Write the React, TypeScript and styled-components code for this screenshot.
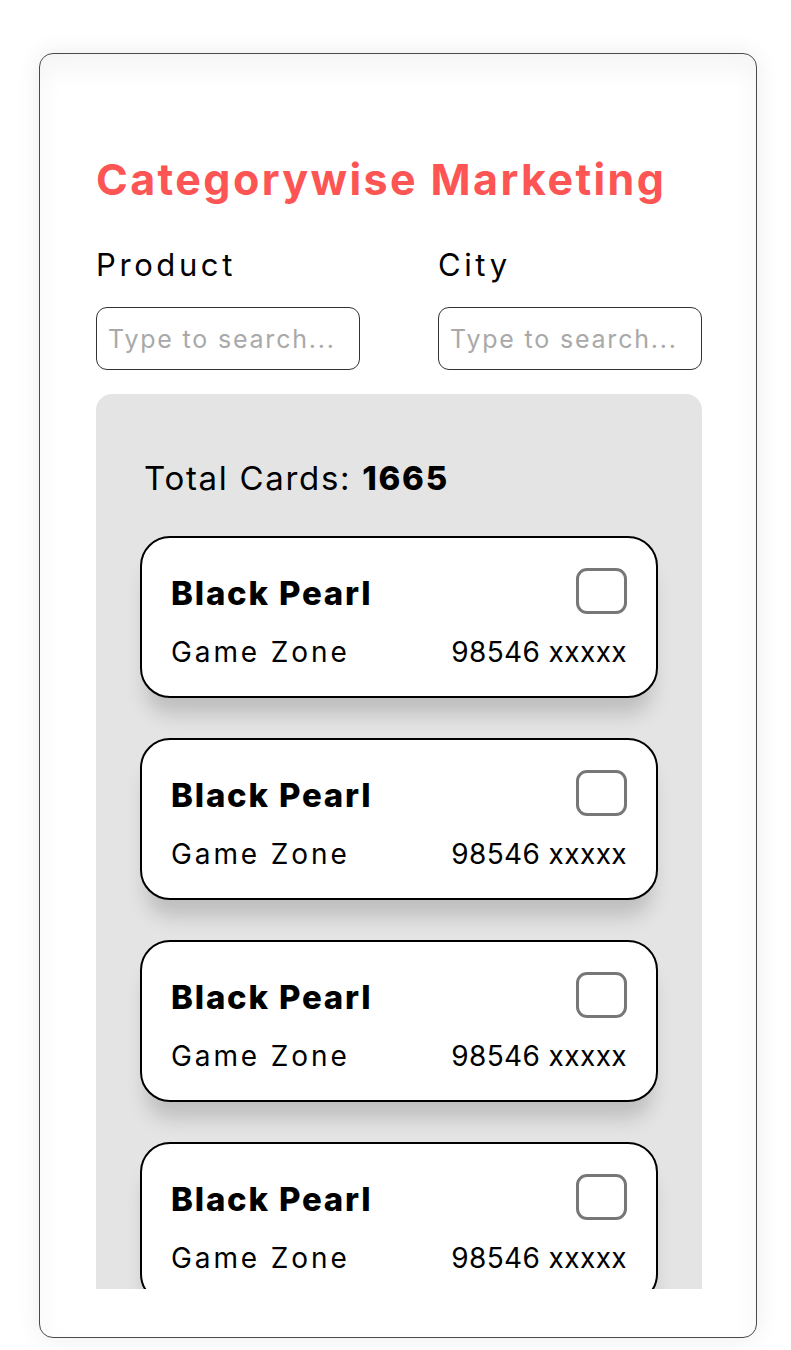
import React from "react";
import styled, { createGlobalStyle } from "styled-components";

const Global = createGlobalStyle`
  html, body { margin: 0; padding: 0; background: #ffffff; }
  body { font-family: Inter, "Open Sans", sans-serif; color: #000; }
  * { box-sizing: border-box; }
`;

const Page = styled.div`
  padding: 53px 34px 12px 39px;
`;

const Frame = styled.div`
  width: 718px;
  height: 1285px;
  border: 1px solid #4a4a4a;
  border-radius: 14px;
  background: #fff;
  box-shadow: 0 0 24px rgba(0, 0, 0, 0.08), inset 0 14px 26px rgba(0, 0, 0, 0.045);
  padding: 99px 54px 0 56px;
  display: flex;
  flex-direction: column;
`;

const Title = styled.h1`
  margin: 0;
  font-size: 43px;
  line-height: 52px;
  font-weight: 700;
  color: #fd5454;
  letter-spacing: 2.4px;
  white-space: nowrap;
`;

const Filters = styled.div`
  display: grid;
  grid-template-columns: 264px 264px;
  justify-content: space-between;
  margin-top: 40px;
`;

const Field = styled.div`
  display: flex;
  flex-direction: column;
`;

const Label = styled.label`
  font-size: 31px;
  line-height: 40px;
  font-weight: 400;
  letter-spacing: 3.6px;
`;

const Input = styled.input`
  margin-top: 22px;
  height: 63px;
  border: 1.5px solid #333;
  border-radius: 11px;
  padding: 0 11px;
  font-family: inherit;
  font-size: 25px;
  letter-spacing: 1.8px;
  outline: none;
  background: #fff;
  &::placeholder { color: #a9a9a9; }
`;

const Panel = styled.div`
  margin-top: 24px;
  height: 895px;
  background: #e4e4e4;
  border-radius: 16px 16px 0 0;
  overflow: hidden;
  padding: 62px 44px 0 44px;
`;

const Total = styled.div`
  font-size: 33px;
  line-height: 44px;
  padding-left: 4px;
  letter-spacing: 1.7px;
  b { font-weight: 800; }
`;

const List = styled.div`
  margin-top: 36px;
  display: flex;
  flex-direction: column;
  gap: 40px;
`;

const Card = styled.div`
  height: 162px;
  flex-shrink: 0;
  background: #fff;
  border: 2px solid #000;
  border-radius: 30px;
  box-shadow: 0 22px 20px -6px rgba(0, 0, 0, 0.17);
  padding: 30px 29px 0 29px;
  display: flex;
  flex-direction: column;
`;

const Row = styled.div`
  display: flex;
  justify-content: space-between;
  align-items: center;
`;

const Name = styled.div`
  font-size: 33px;
  line-height: 50px;
  font-weight: 800;
  letter-spacing: 1.8px;
`;

const Check = styled.div`
  width: 51px;
  height: 46px;
  border: 3px solid #777;
  border-radius: 11px;
  margin-top: -4px;
`;

const Meta = styled.div`
  margin-top: 14px;
  display: flex;
  justify-content: space-between;
  font-size: 28px;
  line-height: 40px;
`;

const Place = styled.span`
  letter-spacing: 2.9px;
`;

const Phone = styled.span`
  letter-spacing: 0.4px;
`;

const cards = [1, 2, 3, 4];

export default function App() {
  return (
    <>
      <Global />
      <Page>
        <Frame>
          <Title>Categorywise Marketing</Title>
          <Filters>
            <Field>
              <Label>Product</Label>
              <Input placeholder="Type to search..." />
            </Field>
            <Field>
              <Label>City</Label>
              <Input placeholder="Type to search..." />
            </Field>
          </Filters>
          <Panel>
            <Total>
              Total Cards: <b>1665</b>
            </Total>
            <List>
              {cards.map((c) => (
                <Card key={c}>
                  <Row>
                    <Name>Black Pearl</Name>
                    <Check />
                  </Row>
                  <Meta>
                    <Place>Game Zone</Place>
                    <Phone>98546 xxxxx</Phone>
                  </Meta>
                </Card>
              ))}
            </List>
          </Panel>
        </Frame>
      </Page>
    </>
  );
}
